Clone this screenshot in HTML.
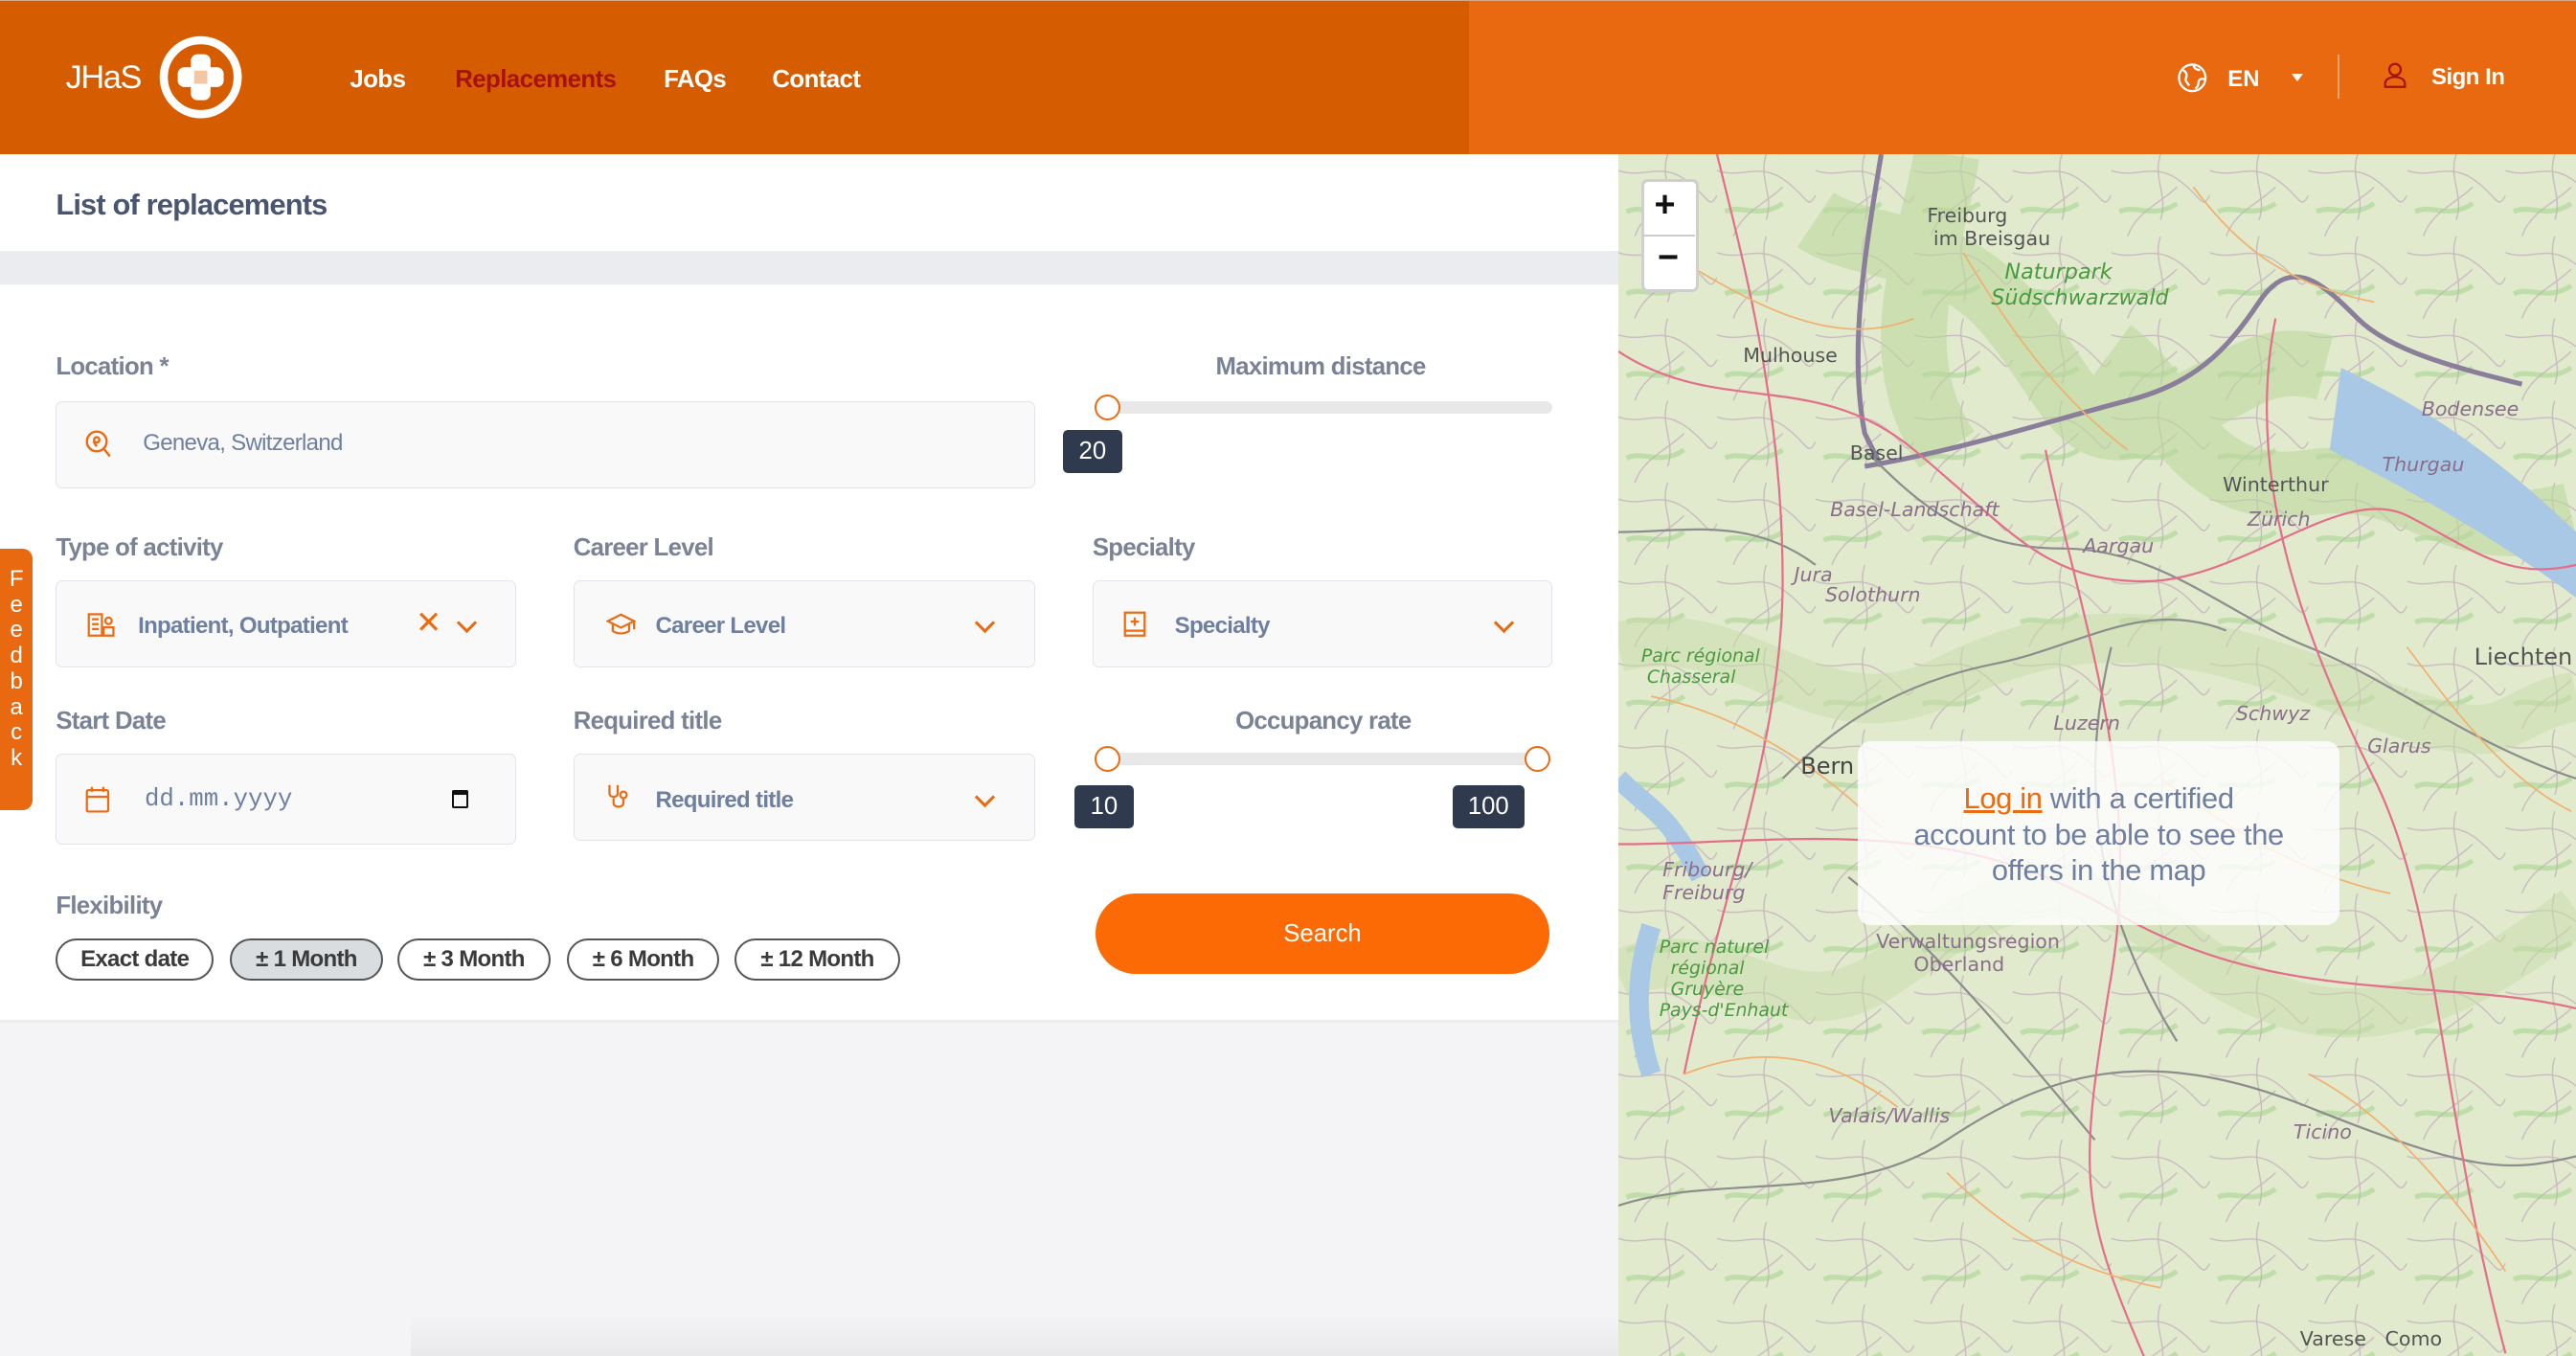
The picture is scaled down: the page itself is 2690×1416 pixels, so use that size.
<!DOCTYPE html>
<html><head><meta charset="utf-8">
<style>
html,body{margin:0;padding:0;overflow:hidden;width:2690px;height:1416px;background:#f4f4f6}
#w{zoom:1.71556;width:1568px;height:826px;position:relative;font-family:"Liberation Sans",sans-serif;overflow:hidden;background:#f4f4f6}
.a{position:absolute}
.hdr{left:0;top:0;width:1568px;height:94px;background:#e8690f;border-top:1px solid #d9a88a;box-sizing:border-box}
.nav{font-weight:bold;font-size:15px;color:#fff;top:40px;letter-spacing:-.3px}
.lbl{font-size:15px;color:#7a8296;font-weight:bold;letter-spacing:-.4px}
.inp{background:#f9f9fa;border:1px solid #e3e3ec;border-radius:4px;box-sizing:border-box}
.itx{font-size:14px;color:#6f7fa0;font-weight:bold;letter-spacing:-.4px}
.track{background:#e8e8e8;height:8px;border-radius:4px}
.th{width:16px;height:16px;border-radius:50%;background:#fff;border:1.5px solid #ec6a10;box-sizing:border-box}
.bd{background:#2f3a4f;color:#fff;font-size:15px;border-radius:3px;text-align:center;line-height:26px;height:26px}
.pill{top:571px;height:26px;border:1.5px solid #555;border-radius:14px;box-sizing:border-box;font-size:14px;font-weight:bold;color:#3a3a3a;text-align:center;line-height:23px;background:#fff;letter-spacing:-.4px}
.chev{width:7px;height:7px;border-right:2px solid #e8690f;border-bottom:2px solid #e8690f;transform:rotate(45deg)}
.ml{font-size:12px;color:#555;font-family:"DejaVu Sans",sans-serif}
.mg{font-size:12px;color:#8a6e8a;font-style:italic;font-family:"DejaVu Sans",sans-serif}
</style></head><body><div id="w">
<div class="a hdr"></div>
<div class="a" style="left:0;top:0;width:894px;height:94px;background:#d65c00;border-top:1px solid #d9a88a;box-sizing:border-box"></div>
<div class="a" style="left:40px;top:36px;color:#fff;font-size:20px;letter-spacing:-.8px">JHaS</div>
<svg class="a" style="left:96px;top:21px" width="52" height="52" viewBox="0 0 52 52"><circle cx="26" cy="26" r="22.5" fill="none" stroke="#fff" stroke-width="5"/><rect x="20" y="12" width="12" height="28" rx="4" fill="#fff"/><rect x="12" y="20" width="28" height="12" rx="4" fill="#fff"/><rect x="22" y="22" width="8" height="8" fill="#f3c6a4"/></svg>
<div class="a nav" style="left:213px">Jobs</div>
<div class="a nav" style="left:277px;color:#a8120e">Replacements</div>
<div class="a nav" style="left:404px">FAQs</div>
<div class="a nav" style="left:470px">Contact</div>
<svg class="a" style="left:1325px;top:38px" width="19" height="19" viewBox="0 0 20 20" fill="none" stroke="#fff" stroke-width="1.4"><circle cx="10" cy="10" r="8.5"/><path d="M4 5c2 1 3 3 2 5s1 3 2 5M11 2c0 2 2 3 4 3M18 11c-2-1-4 0-4 2s-1 3-2 4"/></svg>
<div class="a" style="left:1356px;top:40px;color:#fff;font-weight:bold;font-size:14px">EN</div>
<div class="a" style="left:1395px;top:45px;border:4px solid transparent;border-top:5px solid #fff"></div>
<div class="a" style="left:1423px;top:33px;width:1px;height:27px;background:#f3a46c"></div>
<svg class="a" style="left:1451px;top:38px" width="14" height="16" viewBox="0 0 14 16" fill="none" stroke="#a8120e" stroke-width="1.3"><circle cx="7" cy="4.5" r="3.5"/><path d="M1 15v-2c0-2 2-4 6-4s6 2 6 4v2z"/></svg>
<div class="a" style="left:1480px;top:39px;color:#fff;font-weight:bold;font-size:14px;letter-spacing:-.3px">Sign In</div>

<div class="a" style="left:0;top:94px;width:985px;height:59px;background:#fff"></div>
<div class="a" style="left:34px;top:114px;font-size:18px;color:#4a5570;letter-spacing:-.5px;font-weight:bold;-webkit-text-stroke:0">List of replacements</div>
<div class="a" style="left:0;top:153px;width:985px;height:20px;background:#ebecf0"></div>
<div class="a" style="left:0;top:173px;width:985px;height:448px;background:#fff;border-bottom:2px solid #ececef"></div>

<div class="a lbl" style="left:34px;top:215px">Location *</div>
<div class="a inp" style="left:34px;top:244px;width:596px;height:53px"></div>
<svg class="a" style="left:52px;top:262px" width="17" height="18" viewBox="0 0 17 18" fill="none" stroke="#ec6a10" stroke-width="1.4"><circle cx="7" cy="7" r="6"/><circle cx="7" cy="6" r="1.6"/><path d="M7 10l-2-3M11 11l4 5"/></svg>
<div class="a itx" style="left:87px;top:262px;font-weight:normal">Geneva, Switzerland</div>
<div class="a lbl" style="left:740px;top:215px">Maximum distance</div>
<div class="a track" style="left:674px;top:244px;width:271px"></div>
<div class="a th" style="left:666px;top:240px"></div>
<div class="a bd" style="left:647px;top:262px;width:36px">20</div>

<div class="a lbl" style="left:34px;top:325px">Type of activity</div>
<div class="a lbl" style="left:349px;top:325px">Career Level</div>
<div class="a lbl" style="left:665px;top:325px">Specialty</div>
<div class="a inp" style="left:34px;top:353px;width:280px;height:53px"></div>
<div class="a inp" style="left:349px;top:353px;width:281px;height:53px"></div>
<div class="a inp" style="left:665px;top:353px;width:280px;height:53px"></div>
<svg class="a" style="left:53px;top:372px" width="18" height="16" viewBox="0 0 18 16" fill="none" stroke="#ec6a10" stroke-width="1.3"><rect x="1" y="2" width="8" height="13"/><path d="M3 5h4M3 8h4M3 11h4"/><circle cx="13" cy="6" r="2"/><rect x="10" y="10" width="6" height="5"/></svg>
<div class="a itx" style="left:84px;top:373px">Inpatient, Outpatient</div>
<div class="a" style="left:253px;top:368px;color:#ec6a10;font-size:19px">✕</div>
<div class="a chev" style="left:280px;top:375px"></div>
<svg class="a" style="left:369px;top:373px" width="18" height="14" viewBox="0 0 18 14" fill="none" stroke="#ec6a10" stroke-width="1.3"><path d="M1 5l8-4 8 4-8 4z M4 7v4c3 2 7 2 10 0V7M17 5v5"/></svg>
<div class="a itx" style="left:399px;top:373px">Career Level</div>
<div class="a chev" style="left:595px;top:375px"></div>
<svg class="a" style="left:684px;top:372px" width="14" height="16" viewBox="0 0 14 16" fill="none" stroke="#ec6a10" stroke-width="1.3"><rect x="1" y="1" width="12" height="14"/><path d="M1 12h12M7 4v5M4.5 6.5h5"/></svg>
<div class="a itx" style="left:715px;top:373px">Specialty</div>
<div class="a chev" style="left:911px;top:375px"></div>

<div class="a lbl" style="left:34px;top:431px">Start Date</div>
<div class="a lbl" style="left:349px;top:431px">Required title</div>
<div class="a lbl" style="left:752px;top:431px">Occupancy rate</div>
<div class="a inp" style="left:34px;top:459px;width:280px;height:55px"></div>
<svg class="a" style="left:52px;top:478px" width="15" height="17" viewBox="0 0 15 17" fill="none" stroke="#ec6a10" stroke-width="1.3"><rect x="1" y="3" width="13" height="13" rx="1"/><path d="M1 7h13M4 1v3M11 1v3"/></svg>
<div class="a" style="left:88px;top:478px;font-family:'Liberation Mono',monospace;font-size:15px;color:#6f7fa0">dd.mm.yyyy</div>
<div class="a" style="left:275px;top:481px;width:10px;height:11px;border:1.5px solid #111;border-top-width:3px;box-sizing:border-box;border-radius:1px"></div>
<div class="a inp" style="left:349px;top:459px;width:281px;height:53px"></div>
<svg class="a" style="left:369px;top:477px" width="16" height="18" viewBox="0 0 16 18" fill="none" stroke="#ec6a10" stroke-width="1.3"><path d="M2 1v5c0 3 5 3 5 0V1M4.5 9v3c0 3 6 3 6 0V9"/><circle cx="10.5" cy="7" r="2"/></svg>
<div class="a itx" style="left:399px;top:479px">Required title</div>
<div class="a chev" style="left:595px;top:481px"></div>
<div class="a track" style="left:674px;top:458px;width:262px"></div>
<div class="a th" style="left:666px;top:454px"></div>
<div class="a th" style="left:928px;top:454px"></div>
<div class="a bd" style="left:654px;top:478px;width:36px">10</div>
<div class="a bd" style="left:884px;top:478px;width:44px">100</div>

<div class="a lbl" style="left:34px;top:543px">Flexibility</div>
<div class="a pill" style="left:34px;width:96px">Exact date</div>
<div class="a pill" style="left:140px;width:93px;background:#d9dde0">± 1 Month</div>
<div class="a pill" style="left:242px;width:93px">± 3 Month</div>
<div class="a pill" style="left:345px;width:93px">± 6 Month</div>
<div class="a pill" style="left:447px;width:101px">± 12 Month</div>
<div class="a" style="left:667px;top:544px;width:276px;height:49px;border-radius:25px;background:#fc6a05;color:#fff;font-size:15px;text-align:center;line-height:49px">Search</div>

<div class="a" style="left:0;top:334px;width:20px;height:159px;background:#e8690f;border-radius:0 6px 6px 0;color:#fff;font-size:14px;line-height:15.6px;text-align:center;padding-top:11px;box-sizing:border-box">F<br>e<br>e<br>d<br>b<br>a<br>c<br>k</div>

<div class="a" style="left:250px;top:800px;width:735px;height:26px;background:linear-gradient(#f4f4f6,#e9e9ec)"></div>

<div class="a" style="left:985px;top:94px;width:583px;height:732px;background:#e1eacd;overflow:hidden">
<svg width="583" height="732" viewBox="0 0 583 732" fill="none">
<defs><pattern id="tx" width="60" height="50" patternUnits="userSpaceOnUse"><path d="M0 10c15 5 25-5 40 5s15 20 20 10M10 50c5-15 20-20 30-30M30 0c-5 15 5 25 0 40" stroke="#c9b9c0" stroke-width=".8"/><path d="M5 35c10-5 20 5 35-5" stroke="#9ccf85" stroke-width="3" opacity=".5"/></pattern></defs>
<rect width="583" height="732" fill="url(#tx)"/>
<path d="M120 40c30 20 80 10 120 60s40 80 90 60 60-40 100-30M200 0c-10 60-40 120 0 180M300 120c40 30 50 90 120 80s80 40 160 20" stroke="#bcd79e" stroke-width="40" opacity=".6"/>
<path d="M0 500c60-30 100 40 160 0s100-80 180-20 140 60 243-20M0 300c80-20 120 60 200 20s150-30 250 10 80 10 133 0" stroke="#c7dcaa" stroke-width="30" opacity=".5"/>
<path d="M440 130c40 20 80 40 143 100v40c-40-30-90-60-150-90z" fill="#a9c8e6"/>
<path d="M0 380c20 20 30 20 50 60M20 470c-10 30-10 60 0 90" stroke="#a9c8e6" stroke-width="12"/>
<path d="M160 0c-10 60-20 120-10 170l10 20M150 190c60-10 120-30 160-40s60-30 80-60 40-10 60 10 60 30 100 40" stroke="#8a7e9a" stroke-width="3"/>
<path d="M0 230c40 0 80-10 120 20M150 180c30 30 60 60 120 60s100 40 150 60 100 60 163 80M100 380c40-40 80-60 130-70s90-40 140-20M140 440c50 40 100 100 150 160M300 300c-20 80-10 160 40 240M0 640c60-20 140 0 200-40s120-60 220-20 120 40 163 30" stroke="#8d8d8d" stroke-width="1.3"/>
<path d="M0 120c60 40 120 10 180 60s80 80 140 80 120-60 160-40 60 40 103 30M60 0c20 80 40 160 40 260s-40 200-60 300M260 180c20 100 60 200 40 320s-20 140 20 232M400 100c-20 100 20 200 60 280s40 200 80 350M0 420c100 0 200-20 300 40s200 40 283 60" stroke="#e46f8a" stroke-width="1.3"/>
<path d="M30 60c50 30 100 60 150 40M210 60c30 50 60 90 100 120M350 20c30 40 60 60 110 70M20 330c50 10 100 40 140 80M330 380c40 30 90 60 140 70M40 560c50-20 90-10 130 20M200 620c40 40 80 60 130 70M420 560c40 20 80 60 120 120M480 300c30 40 60 80 100 100" stroke="#f0b070" stroke-width="1"/>
</svg>
<div class="a ml" style="left:188px;top:30px">Freiburg<br>&nbsp;im Breisgau</div>
<div class="a" style="left:227px;top:64px;color:#4a9a40;font-style:italic;font-size:13px;line-height:16px;font-family:'DejaVu Sans',sans-serif">&nbsp;&nbsp;Naturpark<br>Südschwarzwald</div>
<div class="a ml" style="left:76px;top:115px">Mulhouse</div>
<div class="a ml" style="left:141px;top:175px">Basel</div>
<div class="a ml" style="left:368px;top:194px">Winterthur</div>
<div class="a mg" style="left:129px;top:209px">Basel-Landschaft</div>
<div class="a mg" style="left:383px;top:215px">Zürich</div>
<div class="a mg" style="left:283px;top:231px">Aargau</div>
<div class="a mg" style="left:107px;top:249px">Jura</div>
<div class="a mg" style="left:126px;top:261px">Solothurn</div>
<div class="a mg" style="left:465px;top:182px">Thurgau</div>
<div class="a mg" style="left:489px;top:148px">Bodensee</div>
<div class="a" style="left:521px;top:298px;font-size:14px;color:#555;font-family:'DejaVu Sans',sans-serif">Liechten</div>
<div class="a mg" style="left:265px;top:339px">Luzern</div>
<div class="a mg" style="left:376px;top:333px">Schwyz</div>
<div class="a mg" style="left:456px;top:353px">Glarus</div>
<div class="a" style="left:111px;top:364px;font-size:14px;color:#444;font-family:'DejaVu Sans',sans-serif">Bern</div>
<div class="a" style="left:14px;top:299px;color:#4a9a40;font-style:italic;font-size:11px;font-family:'DejaVu Sans',sans-serif">Parc régional<br>&nbsp;Chasseral</div>
<div class="a mg" style="left:27px;top:428px">Fribourg/<br>Freiburg</div>
<div class="a" style="left:25px;top:476px;color:#4a9a40;font-style:italic;font-size:11px;font-family:'DejaVu Sans',sans-serif">Parc naturel<br>&nbsp;&nbsp;régional<br>&nbsp;&nbsp;Gruyère<br>Pays-d'Enhaut</div>
<div class="a mg" style="left:157px;top:472px;font-style:normal">Verwaltungsregion<br>&nbsp;&nbsp;&nbsp;&nbsp;&nbsp;&nbsp;Oberland</div>
<div class="a mg" style="left:128px;top:578px">Valais/Wallis</div>
<div class="a mg" style="left:411px;top:588px">Ticino</div>
<div class="a ml" style="left:415px;top:714px">Varese&nbsp;&nbsp;&nbsp;Como</div>
<div class="a" style="left:14px;top:15px;width:35px;height:69px;background:#fff;border:2px solid #cfcfcf;border-radius:4px;box-sizing:border-box"></div>
<div class="a" style="left:16px;top:49px;width:31px;height:1px;background:#ccc"></div>
<div class="a" style="left:22px;top:18px;font-size:22px;font-weight:bold;color:#111">+</div>
<div class="a" style="left:24px;top:50px;font-size:22px;font-weight:bold;color:#111">−</div>
<div class="a" style="left:146px;top:357px;width:293px;height:112px;background:rgba(255,255,255,.82);border-radius:8px;text-align:center;font-size:18px;color:#6f7fa0;line-height:22px;padding-top:24px;box-sizing:border-box;letter-spacing:-.2px"><span style="color:#ec6a10;text-decoration:underline">Log in</span> with a certified<br>account to be able to see the<br>offers in the map</div>
</div>
</div></body></html>
